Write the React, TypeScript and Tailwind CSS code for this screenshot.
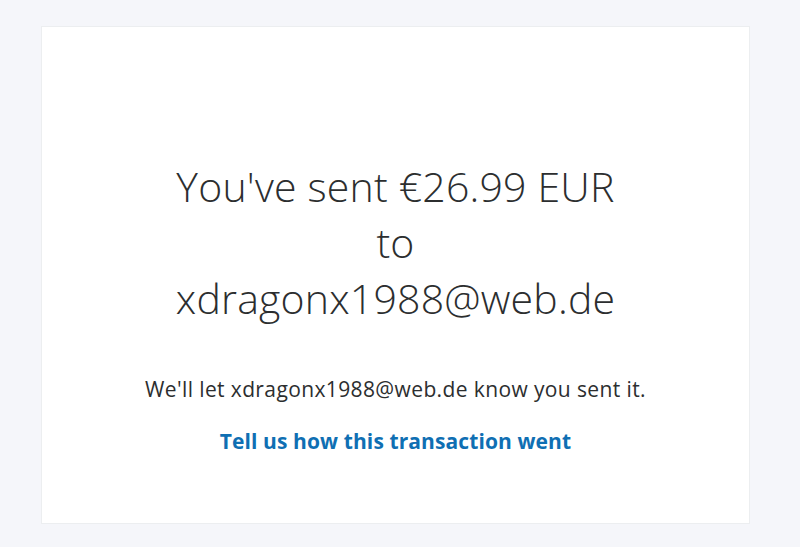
import React from "react";

export default function App() {
  return (
    <div className="w-[800px] h-[547px] bg-[#f5f6fa] pt-[26px] pl-[41px]" style={{ fontFamily: '"Open Sans", "Liberation Sans", sans-serif' }}>
      <div className="w-[709px] h-[498px] bg-white border border-[#eceef0] flex flex-col items-center">
        <div className="mt-[131px] text-center text-[41px] leading-[56px] font-light text-[#2c2e2f] tracking-[0.2px]">
          <div>You've sent €26.99 EUR</div>
          <div>to</div>
          <div>xdragonx1988@web.de</div>
        </div>
        <div className="mt-[51px] text-[21px] leading-[24px] text-[#2c2e2f] tracking-[0.38px]">
          We'll let xdragonx1988@web.de know you sent it.
        </div>
        <div className="mt-[28px] text-[21px] leading-[24px] font-bold text-[#0f6fb3] tracking-[0.1px]">
          Tell us how this transaction went
        </div>
      </div>
    </div>
  );
}
